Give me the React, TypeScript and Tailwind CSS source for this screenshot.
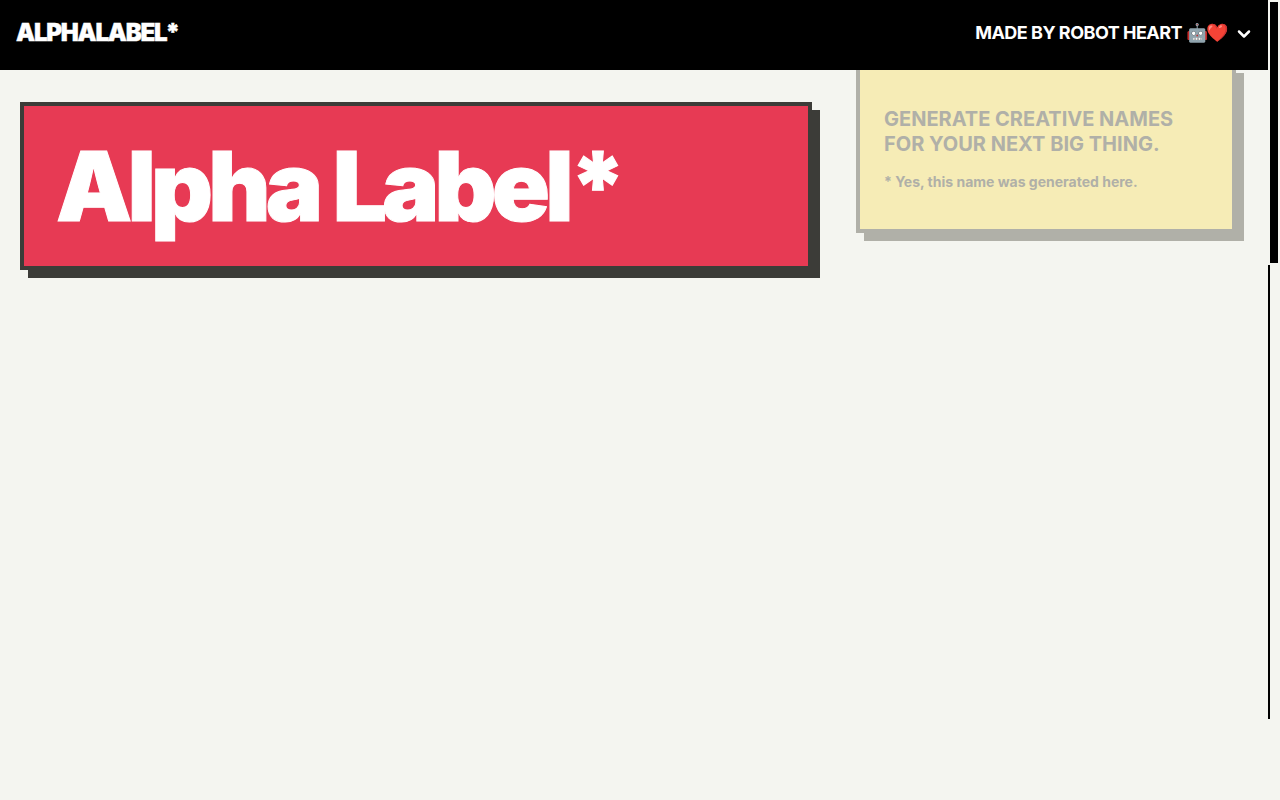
import { ChevronDown } from 'lucide-react';

export default function App() {
  return (
    <div className="relative min-h-[800px] w-[1280px] overflow-hidden bg-[#f4f5f0] font-['Inter',sans-serif] [font-optical-sizing:none]">
      {/* Nav */}
      <header className="relative z-10 flex h-[70px] w-[1268px] items-center justify-between bg-black pr-[14px] pb-[5px] pl-4 text-white">
        <div className="text-[24px] font-black tracking-[-0.05em] [-webkit-text-stroke:0.4px_white]">ALPHALABEL*</div>
        <div className="flex items-center">
          <span className="text-[18px] font-bold tracking-[-0.028em]">
            MADE BY ROBOT HEART <span className="tracking-[-0.08em]">🤖❤️</span>
          </span>
          <ChevronDown className="mt-[2px] ml-[7px] h-[20px] w-[20px]" strokeWidth={3} />
        </div>
      </header>

      {/* Main */}
      <main className="flex items-start pl-5">
        <div className="mt-8 w-[792px] border-4 border-[#3c3c38] bg-[#e73a54] pl-[32px] shadow-[8px_8px_0_#3c3c38]">
          <h1 className="h-[160px] text-[96px] leading-[160px] font-black tracking-[-0.05em] text-white [-webkit-text-stroke:1px_white]">Alpha Label*</h1>
        </div>
        <div className="mt-[-5px] ml-[44px] h-[168px] w-[380px] border-4 border-[#b0b0a8] bg-[#f6ecb6] px-6 pt-[38px] shadow-[8px_8px_0_#b0b0a8]">
          <h2 className="text-[20px] leading-[25px] font-bold text-[#b0b0a8]">
            GENERATE CREATIVE NAMES
            <br />
            FOR YOUR NEXT BIG THING.
          </h2>
          <p className="mt-[15px] text-[14px] leading-[20px] font-bold text-[#b0b0a8]">* Yes, this name was generated here.</p>
        </div>
      </main>

      {/* Scroll bars */}
      <div className="absolute top-[2px] left-[1270px] h-[261px] w-2 bg-black" />
      <div className="absolute top-[265px] left-[1268px] h-[454px] w-[2px] bg-black" />
    </div>
  );
}
